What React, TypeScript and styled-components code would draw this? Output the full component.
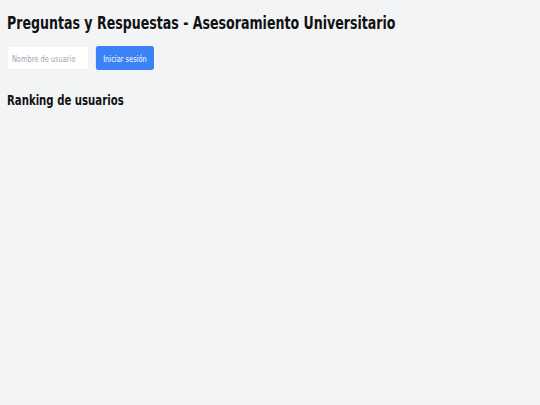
import styled, { createGlobalStyle } from "styled-components";

const GlobalStyle = createGlobalStyle`
  html, body {
    margin: 0;
    padding: 0;
    background: #f3f4f6;
    overflow: hidden;
  }
`;

// the reference is a horizontally squeezed capture: the whole page is narrowed to 70%
const Page = styled.div`
  width: 142.857%;
  min-height: 100vh;
  box-sizing: border-box;
  padding: 11.5px 10px;
  transform: scaleX(0.7);
  transform-origin: 0 0;
  font-family: "DejaVu Sans", "Liberation Sans", sans-serif;
  color: #111;
`;

const Title = styled.h1`
  margin: 0 0 12.5px;
  font-size: 18px;
  font-weight: bold;
  line-height: 22px;
`;

const LoginRow = styled.div`
  display: flex;
  align-items: center;
  gap: 10px;
  margin-bottom: 21px;
`;

const UserInput = styled.input`
  width: 117px;
  height: 24px;
  box-sizing: border-box;
  border: 1px solid #eef0f3;
  border-radius: 2px;
  background: #fff;
  padding: 0 6px;
  font-family: inherit;
  font-size: 9.5px;
  color: #111;
  outline: none;
  &::placeholder {
    color: #9ca3af;
  }
`;

const LoginButton = styled.button`
  width: 83px;
  height: 24px;
  padding: 0;
  border: none;
  border-radius: 3px;
  background: #3b82f6;
  color: #fff;
  font-family: inherit;
  font-size: 9.5px;
  cursor: pointer;
`;

const SectionTitle = styled.h2`
  margin: 0;
  font-size: 14.5px;
  font-weight: bold;
  line-height: 18px;
`;

export default function App() {
  return (
    <>
      <GlobalStyle />
      <Page>
        <Title>Preguntas y Respuestas - Asesoramiento Universitario</Title>
        <LoginRow>
          <UserInput type="text" placeholder="Nombre de usuario" />
          <LoginButton>Iniciar sesión</LoginButton>
        </LoginRow>
        <SectionTitle>Ranking de usuarios</SectionTitle>
      </Page>
    </>
  );
}
